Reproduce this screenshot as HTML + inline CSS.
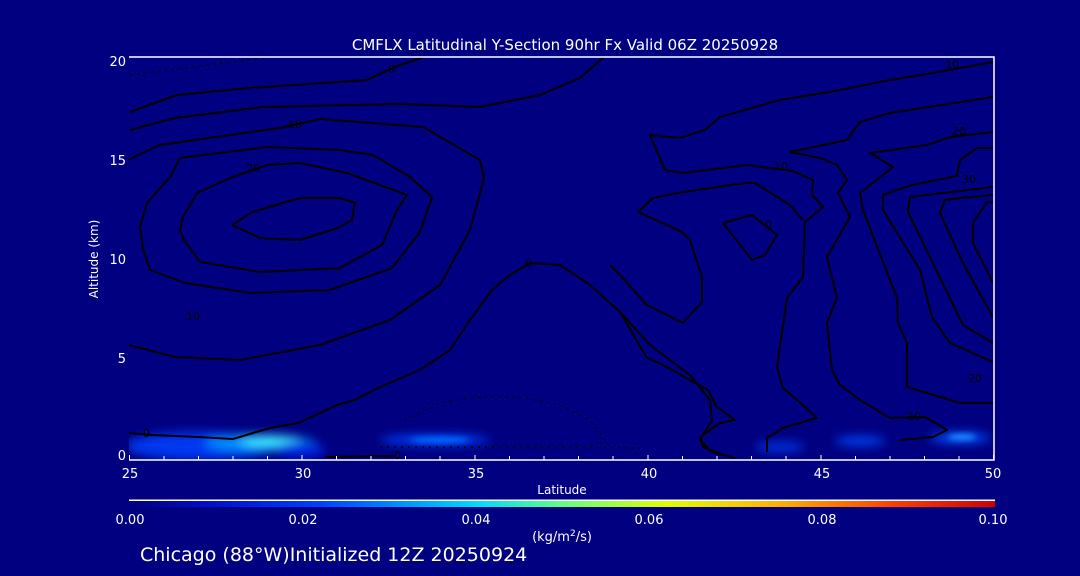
<!DOCTYPE html>
<html><head><meta charset="utf-8"><style>
html,body{margin:0;padding:0;background:#000080;}
svg{display:block;}
text{font-family:"DejaVu Sans","Liberation Sans",sans-serif;fill:#fff;}
</style></head><body>
<svg width="1080" height="576" viewBox="0 0 1080 576" xmlns="http://www.w3.org/2000/svg">
<defs>
<linearGradient id="cb" x1="0" x2="1">
<stop offset="0" stop-color="#000080"/>
<stop offset="0.1" stop-color="#0010d0"/>
<stop offset="0.22" stop-color="#0040ff"/>
<stop offset="0.4" stop-color="#00d8ff"/>
<stop offset="0.5" stop-color="#60ff80"/>
<stop offset="0.62" stop-color="#e0ff00"/>
<stop offset="0.75" stop-color="#ffb000"/>
<stop offset="0.88" stop-color="#ff4000"/>
<stop offset="1" stop-color="#d00000"/>
</linearGradient>
<filter id="bl" x="-50%" y="-50%" width="200%" height="200%"><feGaussianBlur stdDeviation="5"/></filter>
<filter id="bl2" x="-50%" y="-50%" width="200%" height="200%"><feGaussianBlur stdDeviation="3"/></filter>
<clipPath id="pc"><rect x="129" y="57" width="865" height="403"/></clipPath>
</defs>
<rect width="1080" height="576" fill="#000080"/>
<g clip-path="url(#pc)">
<g filter="url(#bl)">
<ellipse cx="200" cy="446" rx="75" ry="14" fill="#0038f0"/>
<ellipse cx="260" cy="443" rx="55" ry="8" fill="#0090ff"/>
<ellipse cx="270" cy="441" rx="30" ry="5" fill="#40f0ff"/>
<ellipse cx="300" cy="450" rx="25" ry="8" fill="#0020e0"/>
<ellipse cx="435" cy="440" rx="55" ry="5" fill="#0040ff"/>
<ellipse cx="780" cy="447" rx="25" ry="5" fill="#0030e0"/>
<ellipse cx="860" cy="441" rx="25" ry="5" fill="#0040f0"/>
<ellipse cx="960" cy="438" rx="30" ry="5" fill="#0050ff"/>
</g>
<g filter="url(#bl2)">
<ellipse cx="440" cy="440" rx="30" ry="3" fill="#0070ff"/>
<ellipse cx="962" cy="437" rx="14" ry="3" fill="#2090ff"/>
</g>
<g fill="none" stroke="#000" stroke-width="2" stroke-linejoin="round">
<polyline points="130,112 177,95 250,88 367,80 395,67 427,56"/>
<polyline points="130,130 175,118 263,107 400,104 480,107 540,95 580,78 605,56"/>
<polyline points="129,160 138,155 160,145 280,128 320,119 423,127 480,160 484,178 470,230 440,285 390,320 320,345 240,360 175,357 129,345"/>
<polyline points="180,158 267,147 340,150 373,155 410,177 432,197 420,232 392,268 330,290 250,293 185,283 150,270 143,248 140,227 147,203 170,177 180,158"/>
<polyline points="233,177 267,165 300,163 347,173 407,195 397,210 382,245 340,268 260,272 200,262 184,240 180,230 183,217 197,193 233,177"/>
<polyline points="232,225 252,212 300,198 340,198 355,203 352,220 338,228 300,240 260,238 232,225"/>
<polyline points="129,433 152,435 198,437 233,439 253,433 270,428 298,423 320,413 337,405 355,400 380,387 420,370 450,350 470,320 492,290 510,275 530,263 560,265 590,285 620,312 647,358 663,365 708,390 717,407 735,420 720,423 700,437 703,447 723,455"/>
<polyline points="325,457 395,456"/>
<polyline points="993,62 933,73 890,80 830,92 780,100 720,117 705,130 680,138 650,135 665,170 683,173 747,165 793,171 813,180 812,195 823,207 805,222 803,277 787,298 777,367 783,388 805,407 817,418 783,428 767,438 767,452"/>
<polyline points="610,265 620,275 647,305 683,323 702,302 702,277 690,240 682,232 638,212 653,198 683,192 745,183 755,183 790,205 803,220"/>
<polyline points="620,312 650,345 690,375 710,400 712,420 700,440 712,452 735,458"/>
<polyline points="723,223 752,215 777,235 765,255 752,260 723,223"/>
<polyline points="993,97 890,113 860,122 847,140 790,152 820,158 837,165 847,180 838,193 850,217 827,257 837,298 827,323 832,370 840,385 860,400 890,418 925,417 947,430 933,437 900,440"/>
<polyline points="993,132 950,137 927,145 870,153 893,167 860,193 863,210 897,298 898,323 907,343 907,387 960,403 993,403"/>
<polyline points="993,148 977,148 960,160 957,176 912,185 883,195 883,210 920,270 932,317 950,343 993,362"/>
<polyline points="993,187 910,197 908,212 963,325 993,343"/>
<polyline points="993,195 960,198 945,200 940,213 963,263 993,317"/>
<polyline points="993,202 987,202 973,223 973,243 993,283"/>
</g>
<g fill="none" stroke="#000" stroke-width="1.5" stroke-dasharray="2,5">
<polyline points="130,75 263,58"/>
<polyline points="405,420 440,403 480,397 520,397 560,405 590,420 605,440"/>
<polyline points="380,447 450,447 560,447 640,448"/>
</g>
<g font-size="11">
<text x="388" y="73" style="fill:#000">0</text>
<text x="288" y="128" style="fill:#000">10</text>
<text x="246" y="172" style="fill:#000">20</text>
<text x="186" y="320" style="fill:#000">10</text>
<text x="143" y="437" style="fill:#000">0</text>
<text x="525" y="267" style="fill:#000">0</text>
<text x="394" y="459" style="fill:#000">0</text>
<text x="774" y="170" style="fill:#000">10</text>
<text x="765" y="228" style="fill:#000">0</text>
<text x="945" y="68" style="fill:#000">10</text>
<text x="952" y="135" style="fill:#000">20</text>
<text x="962" y="183" style="fill:#000">30</text>
<text x="968" y="382" style="fill:#000">20</text>
<text x="907" y="420" style="fill:#000">10</text>
</g>
</g>
<g stroke="#fff" stroke-width="1.5" fill="none">
<polyline points="129,57 994,57 994,460 129,460"/>
</g>
<g stroke="#fff" stroke-width="1">
<path d="M129.5 460v-5M164 460v-4M198.5 460v-4M233 460v-4M267.5 460v-4M302 460v-5M336.5 460v-4M371 460v-4M405.5 460v-4M440 460v-4M475 460v-5M509.5 460v-4M544 460v-4M578.5 460v-4M613 460v-4M648 460v-5M682.5 460v-4M717 460v-4M751.5 460v-4M786 460v-4M821 460v-5M855.5 460v-4M890 460v-4M924.5 460v-4M959 460v-4M993.5 460v-5"/>
</g>
<text x="565" y="50" font-size="15" text-anchor="middle">CMFLX Latitudinal Y-Section 90hr  Fx Valid 06Z 20250928</text>
<g font-size="13" text-anchor="end">
<text x="126" y="66">20</text>
<text x="126" y="165">15</text>
<text x="126" y="264">10</text>
<text x="126" y="363">5</text>
<text x="126" y="460">0</text>
</g>
<text transform="translate(98,259) rotate(-90)" font-size="12" text-anchor="middle">Altitude (km)</text>
<g font-size="13" text-anchor="middle">
<text x="130" y="478">25</text>
<text x="303" y="478">30</text>
<text x="476" y="478">35</text>
<text x="649" y="478">40</text>
<text x="822" y="478">45</text>
<text x="993" y="478">50</text>
</g>
<text x="562" y="494" font-size="12" text-anchor="middle">Latitude</text>
<rect x="129" y="499.5" width="866" height="1.5" fill="#fff"/>
<rect x="129" y="501" width="866" height="6" fill="url(#cb)"/>
<g font-size="13" text-anchor="middle">
<text x="130" y="524">0.00</text>
<text x="303" y="524">0.02</text>
<text x="476" y="524">0.04</text>
<text x="649" y="524">0.06</text>
<text x="822" y="524">0.08</text>
<text x="993" y="524">0.10</text>
</g>
<text x="562" y="541" font-size="13" text-anchor="middle">(kg/m<tspan dy="-5" font-size="9">2</tspan><tspan dy="5">/s)</tspan></text>
<text x="140" y="561" font-size="19">Chicago (88°W)Initialized 12Z 20250924</text>
</svg>
</body></html>
